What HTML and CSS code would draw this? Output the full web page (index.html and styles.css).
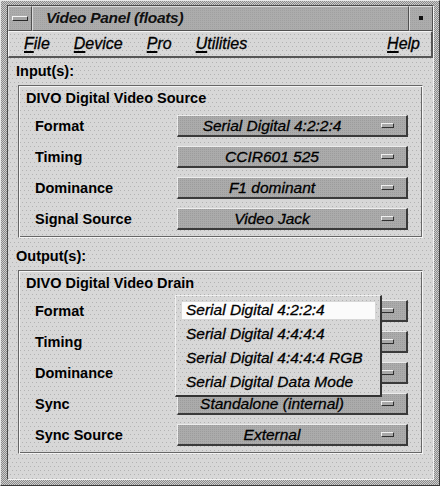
FILE: index.html
```html
<!DOCTYPE html>
<html>
<head>
<meta charset="utf-8">
<title>Video Panel</title>
<link rel="stylesheet" href="styles.css">
</head>
<body>
<div class="window">
  <div class="client">
    <div class="titlebar">
      <div class="tb-btn tb-menu"><span class="tb-bar"></span></div>
      <div class="tb-title">Video Panel (floats)</div>
      <div class="tb-btn tb-min"><span class="tb-dot"></span></div>
    </div>
    <div class="menubar">
      <span class="mi"><u>F</u>ile</span>
      <span class="mi"><u>D</u>evice</span>
      <span class="mi"><u>P</u>ro</span>
      <span class="mi"><u>U</u>tilities</span>
      <span class="mi mi-help"><u>H</u>elp</span>
    </div>
    <div class="content">
      <div class="section-label">Input(s):</div>
      <div class="frame">
        <div class="frame-title">DIVO Digital Video Source</div>
        <div class="rows">
          <span class="label">Format</span>
          <div class="option"><span class="opt-text">Serial Digital 4:2:2:4</span><span class="opt-ind"></span></div>
          <span class="label">Timing</span>
          <div class="option"><span class="opt-text">CCIR601 525</span><span class="opt-ind"></span></div>
          <span class="label">Dominance</span>
          <div class="option"><span class="opt-text">F1 dominant</span><span class="opt-ind"></span></div>
          <span class="label">Signal Source</span>
          <div class="option"><span class="opt-text">Video Jack</span><span class="opt-ind"></span></div>
        </div>
      </div>
      <div class="section-label section-label-out">Output(s):</div>
      <div class="frame">
        <div class="frame-title">DIVO Digital Video Drain</div>
        <div class="rows">
          <span class="label">Format</span>
          <div class="option"><span class="opt-text"></span><span class="opt-ind"></span></div>
          <span class="label">Timing</span>
          <div class="option"><span class="opt-text"></span><span class="opt-ind"></span></div>
          <span class="label">Dominance</span>
          <div class="option"><span class="opt-text"></span><span class="opt-ind"></span></div>
          <span class="label">Sync</span>
          <div class="option"><span class="opt-text">Standalone (internal)</span><span class="opt-ind"></span></div>
          <span class="label">Sync Source</span>
          <div class="option"><span class="opt-text">External</span><span class="opt-ind"></span></div>
        </div>
      </div>
    </div>
  </div>
  <div class="popup">
    <div class="pitem pitem-sel">Serial Digital 4:2:2:4</div>
    <div class="pitem">Serial Digital 4:4:4:4</div>
    <div class="pitem">Serial Digital 4:4:4:4 RGB</div>
    <div class="pitem">Serial Digital Data Mode</div>
  </div>
</div>
</body>
</html>
```
FILE: styles.css
```css
* { box-sizing: border-box; }
html, body { margin: 0; padding: 0; }
body {
  width: 440px;
  height: 486px;
  overflow: hidden;
  background: #c8c8c8;
  font-family: "Liberation Sans", Arial, sans-serif;
  color: #000;
}

.window {
  position: relative;
  width: 440px;
  height: 486px;
  padding: 4px 5px 5px 6px;
  background: repeating-conic-gradient(#8a8a8a 0 25%, #cdcdcd 0 50%) 0 0 / 2px 2px;
  border: 1px solid;
  border-color: #e8e8e8 #3a3a3a #3a3a3a #e8e8e8;
}

.client {
  height: 100%;
  display: flex;
  flex-direction: column;
  border: 1px solid;
  border-color: #4a4a4a #f2f2f2 #f2f2f2 #4a4a4a;
  background-color: #d7d7d7;
  background-image:
    conic-gradient(at 1px 1px, transparent 75%, #b2b2b2 0),
    conic-gradient(at 1px 1px, transparent 75%, #b2b2b2 0);
  background-size: 4px 8px, 4px 8px;
  background-position: 0 0, 2px 4px;
}

/* title bar */
.titlebar {
  height: 25px;
  display: flex;
  background-color: #acacac;
  background-image: conic-gradient(at 1px 1px, transparent 75%, #a0a0a0 0);
  background-size: 2px 2px;
}
.tb-btn {
  width: 24px;
  display: flex;
  align-items: center;
  justify-content: center;
  border: 1px solid;
  border-color: #dadada #505050 #505050 #dadada;
}
.tb-title {
  flex: 1;
  border: 1px solid;
  border-color: #dadada #505050 #505050 #dadada;
  padding-left: 13px;
  font-weight: bold;
  font-style: italic;
  font-size: 15.5px;
  letter-spacing: -0.3px;
  line-height: 22px;
  color: #111;
}
.tb-bar {
  width: 16px;
  height: 5px;
  background: #a4a4a4;
  border: 1px solid;
  border-color: #f4f4f4 #2a2a2a #2a2a2a #f4f4f4;
}
.tb-dot {
  width: 4px;
  height: 4px;
  background: #111;
  margin-top: -2px;
}

/* menu bar */
.menubar {
  height: 27px;
  display: flex;
  align-items: center;
  gap: 24px;
  padding: 0 11px 0 15px;
  border: 1px solid;
  border-width: 1px 2px 2px 1px;
  border-color: #f4f4f4 #555 #555 #f4f4f4;
  font-style: italic;
  font-size: 16px;
  color: #000;
  -webkit-text-stroke: 0.3px #000;
}
.mi u {
  text-decoration-thickness: 2px;
  text-underline-offset: 2px;
}
.mi-help { margin-left: auto; }

/* content */
.content {
  flex: 1;
  padding: 4px 10px 0 8px;
}
.section-label {
  font-weight: bold;
  font-size: 14.5px;
  line-height: 18px;
  margin-bottom: 5px;
}
.section-label-out { margin-top: 9px; }

.frame {
  margin-left: 2px;
  border: 1px solid;
  border-color: #666 #f4f4f4 #f4f4f4 #666;
  box-shadow: inset 1px 1px 0 #f4f4f4, inset -1px -1px 0 #666;
  padding: 3px 14px 7px 7px;
}
.frame-title {
  font-weight: bold;
  font-size: 14.5px;
  line-height: 18px;
  margin-bottom: 8px;
}
.rows {
  display: grid;
  grid-template-columns: 142px 1fr;
  grid-auto-rows: 22px;
  row-gap: 9px;
  padding-left: 9px;
}
.label {
  font-weight: bold;
  font-size: 14.5px;
  line-height: 22px;
}
.option {
  display: flex;
  align-items: center;
  border: 1px solid;
  border-width: 1px 2px 2px 1px;
  border-color: #ececec #3a3a3a #3a3a3a #ececec;
  background-color: #ababab;
  background-image: conic-gradient(at 1px 1px, transparent 75%, #9c9c9c 0);
  background-size: 2px 2px;
}
.opt-text {
  flex: 1;
  text-align: center;
  font-style: italic;
  font-size: 15.5px;
  line-height: 19px;
  color: #000;
  -webkit-text-stroke: 0.3px #000;
}
.opt-ind {
  width: 13px;
  height: 5px;
  margin: 0 12px 0 15px;
  background: #a8a8a8;
  border: 1px solid;
  border-color: #f0f0f0 #303030 #303030 #f0f0f0;
}

/* popup menu */
.popup {
  position: absolute;
  left: 174px;
  top: 294px;
  width: 207px;
  height: 102px;
  padding: 2px 5px 1px 6px;
  border: 1px solid;
  border-width: 1px 2px 2px 1px;
  border-color: #f0f0f0 #333 #333 #f0f0f0;
  background-color: #d7d7d7;
  background-image:
    conic-gradient(at 1px 1px, transparent 75%, #b2b2b2 0),
    conic-gradient(at 1px 1px, transparent 75%, #b2b2b2 0);
  background-size: 4px 8px, 4px 8px;
  background-position: 0 0, 2px 4px;
}
.pitem {
  height: 24px;
  line-height: 24px;
  padding-left: 4px;
  font-style: italic;
  font-size: 15.5px;
  color: #000;
  -webkit-text-stroke: 0.3px #000;
  white-space: nowrap;
}
.pitem-sel {
  background: linear-gradient(#fbfbfb, #fbfbfb) 0 4px / 100% 17px no-repeat;
}
```
